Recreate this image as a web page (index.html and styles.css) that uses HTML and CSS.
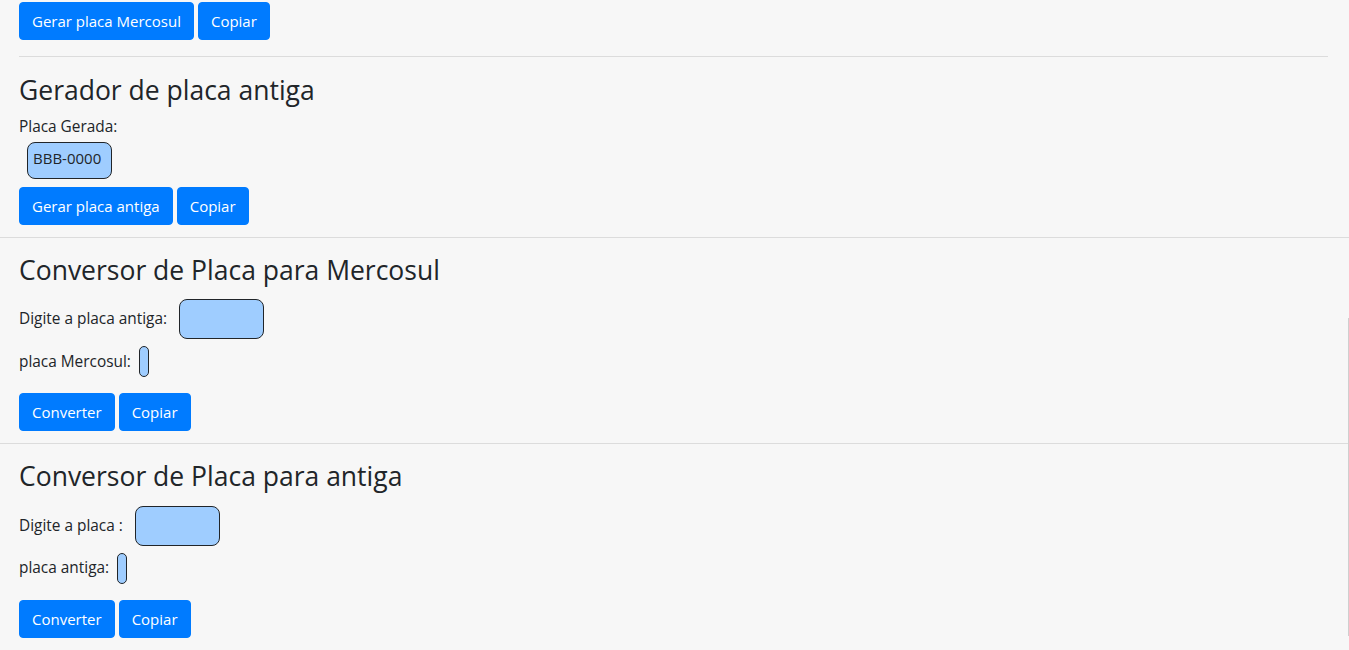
FILE: index.html
```html
<!DOCTYPE html>
<html lang="pt-BR">
<head>
<meta charset="utf-8">
<title>Gerador de placas</title>
<link rel="stylesheet" href="styles.css">
</head>
<body>
<main class="page">
  <section class="block block-first">
    <div class="actions">
      <button class="btn" type="button">Gerar placa Mercosul</button>
      <button class="btn" type="button">Copiar</button>
    </div>
    <hr class="rule-inner">
    <h3 class="title title-tight">Gerador de placa antiga</h3>
    <p class="label">Placa Gerada:</p>
    <div class="plate">BBB-0000</div>
    <div class="actions actions-gen">
      <button class="btn" type="button">Gerar placa antiga</button>
      <button class="btn" type="button">Copiar</button>
    </div>
  </section>

  <hr class="rule-full">

  <section class="block">
    <h3 class="title">Conversor de Placa para Mercosul</h3>
    <div class="field">
      <label class="field-label" for="antiga">Digite a placa antiga:</label>
      <input class="plate-input" id="antiga" type="text">
    </div>
    <div class="field field-out">
      <span class="field-label-out">placa Mercosul:</span>
      <span class="plate-out"></span>
    </div>
    <div class="actions actions-conv">
      <button class="btn" type="button">Converter</button>
      <button class="btn" type="button">Copiar</button>
    </div>
  </section>

  <hr class="rule-full">

  <section class="block">
    <h3 class="title">Conversor de Placa para antiga</h3>
    <div class="field">
      <label class="field-label" for="mercosul">Digite a placa :</label>
      <input class="plate-input" id="mercosul" type="text">
    </div>
    <div class="field field-out">
      <span class="field-label-out">placa antiga:</span>
      <span class="plate-out"></span>
    </div>
    <div class="actions actions-conv">
      <button class="btn" type="button">Converter</button>
      <button class="btn" type="button">Copiar</button>
    </div>
  </section>
</main>
<div class="edge-line"></div>
</body>
</html>
```

FILE: styles.css
```css
html, body {
  margin: 0;
  padding: 0;
  background: #f7f7f7;
}

body {
  font-family: "Open Sans", "Noto Sans", sans-serif;
  font-size: 15.4px;
  line-height: 24px;
  color: #212529;
  height: 650px;
  overflow: hidden;
}

.page {
  display: block;
}

.block {
  padding: 0 21px 0 19px;
}

.block-first {
  padding-top: 2px;
}

.actions {
  display: flex;
  gap: 4px;
}

.actions-gen {
  margin-top: 8px;
  margin-bottom: 12px;
}

.actions-conv {
  margin-top: 16px;
  margin-bottom: 12px;
}

.btn {
  font-family: inherit;
  font-size: 15px;
  line-height: 24px;
  height: 38px;
  padding: 6px 12px;
  border: 1px solid #007bff;
  border-radius: 4px;
  background: #007bff;
  color: #fff;
  cursor: pointer;
}

.rule-inner {
  margin: 16px 0 17px 0;
  border: 0;
  border-top: 1px solid #dcdcdc;
  height: 0;
}

.rule-full {
  margin: 0 0 16px 0;
  border: 0;
  border-top: 1px solid #dcdcdc;
  height: 0;
}

.title {
  margin: 0 0 12px 0;
  font-size: 26.5px;
  font-weight: 400;
  line-height: 33.6px;
}

.title-tight {
  margin-bottom: 7px;
}

.label {
  margin: 0;
  line-height: 24px;
}

.plate {
  display: inline-block;
  box-sizing: border-box;
  margin: 3px 0 0 8px;
  width: 85px;
  height: 37px;
  padding: 3px 5px;
  background: #9fcdff;
  border: 1px solid #212529;
  border-radius: 8px;
  font-size: 15px;
  line-height: 24px;
  vertical-align: top;
}

.field {
  display: flex;
  align-items: center;
  height: 40px;
}

.field-out {
  height: 31px;
  margin-top: 7px;
}

.field-label {
  margin-right: 12px;
}

.field-label-out {
  margin-right: 8px;
}

.plate-input {
  box-sizing: border-box;
  width: 85px;
  height: 40px;
  margin: 0;
  padding: 0 6px;
  background: #9fcdff;
  border: 1px solid #212529;
  border-radius: 8px;
  font-family: inherit;
  font-size: 15px;
  outline: none;
}

.plate-out {
  box-sizing: border-box;
  display: block;
  width: 10px;
  height: 31px;
  background: #9fcdff;
  border: 1px solid #212529;
  border-radius: 5px;
}

.edge-line {
  position: fixed;
  right: 0;
  top: 318px;
  width: 1px;
  height: 318px;
  background: #cfcfcf;
}
```
